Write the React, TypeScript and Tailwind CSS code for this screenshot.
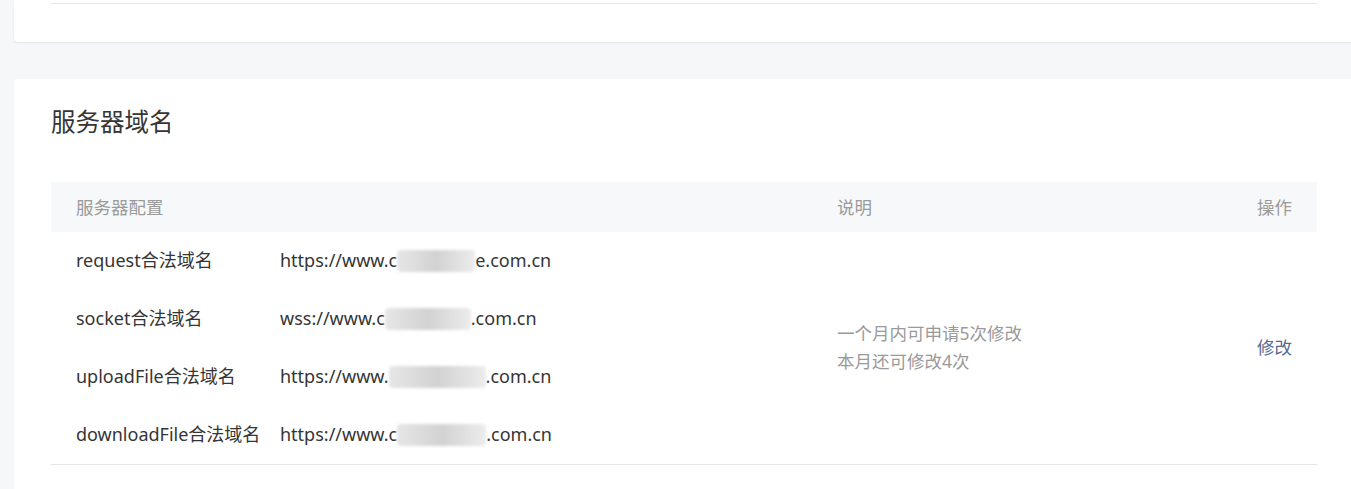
import React from 'react';

const font = { fontFamily: '"Noto Sans", "Noto Sans CJK SC", sans-serif' };

interface DomainRow {
  label: string;
  before: string;
  blurWidth: number;
  after: string;
}

const rows: DomainRow[] = [
  { label: 'request合法域名', before: 'https://www.c', blurWidth: 78, after: 'e.com.cn' },
  { label: 'socket合法域名', before: 'wss://www.c', blurWidth: 86, after: '.com.cn' },
  { label: 'uploadFile合法域名', before: 'https://www.', blurWidth: 97, after: '.com.cn' },
  { label: 'downloadFile合法域名', before: 'https://www.c', blurWidth: 89, after: '.com.cn' },
];

// mosaic-like blurred patch over the hidden part of a domain
function Blur({ width }: { width: number }) {
  return (
    <span
      className="relative inline-block h-[22px] align-middle -mt-[2px] rounded-sm bg-gradient-to-r from-[#e6e6e6] via-[#d2d2d2] to-[#ececec] blur-[1.5px]"
      style={{ width }}
    />
  );
}

export default function App() {
  return (
    <div className="min-h-screen w-full overflow-hidden bg-[#f6f7f9] text-[#353535]" style={font}>
      <div className="w-[1340px] ml-[14px]">
        {/* previous card (cut off at top) */}
        <div className="bg-white rounded-b-[4px] shadow-[0_1px_2px_rgba(0,0,0,0.08)] px-[37px] pt-[3px] pb-[38px]">
          <div className="h-px bg-[#e7e7eb]" />
        </div>

        {/* server domain card */}
        <div className="mt-[37px] bg-white rounded-[4px] px-[37px] pt-[27px] pb-[40px]">
          <h2 className="text-[24.5px] leading-[32px] font-normal text-[#353535]">服务器域名</h2>

          <div className="mt-[44px]">
            {/* table header */}
            <div className="flex items-center h-[50px] bg-[#f6f8f9] text-[17.5px] text-[#9a9a9a]">
              <div className="w-[786px] pl-[25px]">服务器配置</div>
              <div className="flex-1">说明</div>
              <div className="pr-[25px] text-right">操作</div>
            </div>

            {/* table body */}
            <div className="flex border-b border-[#e7e7eb]">
              <div className="w-[786px] pl-[25px]">
                {rows.map((r) => (
                  <div key={r.label} className="flex items-center h-[58px] pb-[2px] text-[18px] text-[#353535]">
                    <span className="w-[204px] shrink-0">{r.label}</span>
                    <span className="whitespace-nowrap">
                      {r.before}
                      <Blur width={r.blurWidth} />
                      {r.after}
                    </span>
                  </div>
                ))}
              </div>
              <div className="flex-1 flex flex-col justify-center pb-[2px] text-[17.5px] leading-[28px] text-[#9a9a9a]">
                <p>一个月内可申请5次修改</p>
                <p>本月还可修改4次</p>
              </div>
              <div className="flex items-center pr-[25px] pb-[2px]">
                <a className="text-[17.5px] text-[#576b95] cursor-pointer">修改</a>
              </div>
            </div>
          </div>
        </div>
      </div>
    </div>
  );
}
